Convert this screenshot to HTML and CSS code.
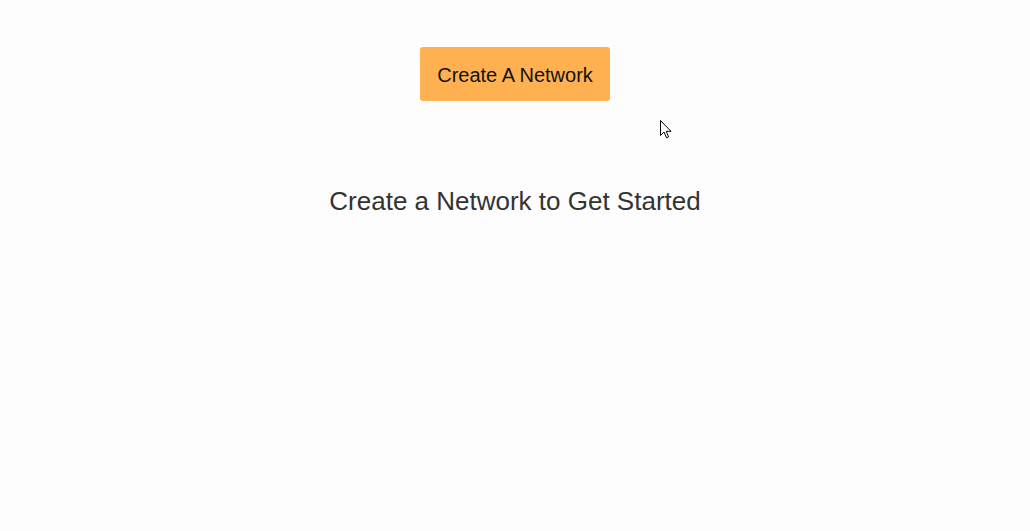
FILE: index.html
```html
<!DOCTYPE html>
<html lang="en">
<head>
  <meta charset="UTF-8" />
  <meta name="viewport" content="width=device-width, initial-scale=1.0" />
  <title>Networks</title>
  <link rel="stylesheet" href="styles.css">
</head>
<body>
  <main class="page">
    <button class="create-btn">Create A Network</button>
    <h2 class="empty-msg">Create a Network to Get Started</h2>
  </main>
  <svg class="cursor" width="12" height="19" viewBox="0 0 12 19">
    <path d="M0.5 0.5 L0.5 15.5 L4 12 L6.5 17.8 L8.6 16.9 L6.2 11.3 L11 11.3 Z" fill="#fff" stroke="#000" stroke-width="1" stroke-linejoin="miter"/>
  </svg>
</body>
</html>
```

FILE: styles.css
```css
html, body {
  margin: 0;
  padding: 0;
  height: 100%;
  background: #fdfdfd;
  font-family: "Liberation Sans", Arial, sans-serif;
}

.page {
  display: flex;
  flex-direction: column;
  align-items: center;
  padding-top: 47px;
}

.create-btn {
  background: #ffb152;
  color: #111;
  border: none;
  border-radius: 3px;
  padding: 17px 17px 15px;
  font-family: inherit;
  font-size: 20px;
  line-height: 22px;
  cursor: pointer;
}

.empty-msg {
  margin: 85px 0 0;
  font-size: 26px;
  font-weight: normal;
  line-height: 30px;
  color: #333;
}

.cursor {
  position: absolute;
  left: 660px;
  top: 120px;
}
```
